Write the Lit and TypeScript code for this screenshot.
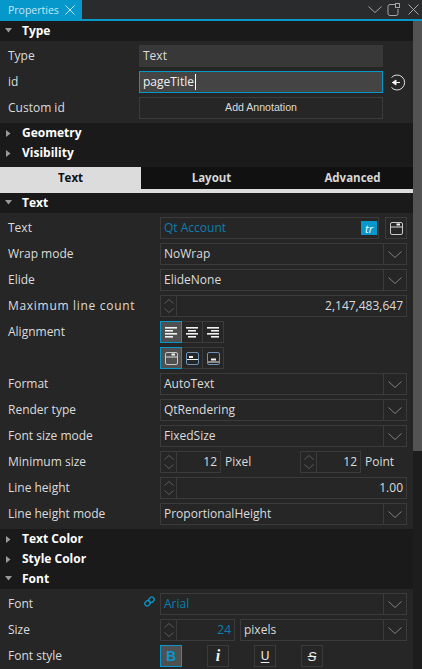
import { LitElement, html, css, svg, nothing } from 'lit';
import { customElement } from 'lit/decorators.js';

const chevron = (w: number, h: number, up = false) => html`
  <svg width=${w} height=${h} viewBox="0 0 ${w} ${h}" fill="none" stroke="currentColor" stroke-width="1">
    <path d=${up ? `M0.5 ${h - 0.5}L${w / 2} 0.5L${w - 0.5} ${h - 0.5}` : `M0.5 0.5L${w / 2} ${h - 0.5}L${w - 0.5} 0.5`}></path>
  </svg>`;

const cross = (s: number) => html`
  <svg width=${s} height=${s} viewBox="0 0 ${s} ${s}" fill="none" stroke="currentColor" stroke-width="1">
    <path d="M0.5 0.5L${s - 0.5} ${s - 0.5}M${s - 0.5} 0.5L0.5 ${s - 0.5}"></path>
  </svg>`;

// 12px square alignment glyphs
const alignIcon = (kind: 'left' | 'center' | 'right') => {
  const rows = [[12, 1], [8, 4], [12, 7], [8, 10]];
  return html`<svg width="12" height="12" viewBox="0 0 12 12" fill="#f2f2f2">
    ${rows.map(([w, y]) => {
      const x = kind === 'left' ? 0 : kind === 'center' ? (12 - w) / 2 : 12 - w;
      return svg`<rect x=${x} y=${y} width=${w} height="1.6"></rect>`;
    })}
  </svg>`;
};

const valignIcon = (kind: 'top' | 'middle' | 'bottom') => html`
  <svg width="13" height="13" viewBox="0 0 13 13" fill="none">
    <rect x="0.5" y="0.5" width="12" height="12" rx="1.5" stroke=${kind === 'top' ? '#c8c8c8' : '#6e93b8'}></rect>
    ${kind === 'top' ? svg`<path d="M1 5H12" stroke="#dcdcdc"></path><path d="M6.5 2.5H10" stroke="#f2f2f2" stroke-width="2"></path>` : nothing}
    ${kind === 'middle' ? svg`<path d="M3 5H7" stroke="#f2f2f2" stroke-width="2"></path><path d="M1 7.5H12" stroke="#f2f2f2"></path>` : nothing}
    ${kind === 'bottom' ? svg`<path d="M4 7.5H9" stroke="#f2f2f2" stroke-width="2"></path><path d="M1 10H12" stroke="#f2f2f2"></path>` : nothing}
  </svg>`;

@customElement('app-root')
export class AppRoot extends LitElement {
  static styles = css`
    :host {
      display: flex;
      flex-direction: column;
      width: 422px;
      height: 669px;
      overflow: hidden;
      background: #1b1b1b;
      color: #dcdcdc;
      font-family: 'Open Sans', 'Noto Sans', sans-serif;
      font-size: 12px;
    }
    .titlebar {
      display: flex;
      align-items: center;
      height: 19px;
      flex: none;
      background: #2a2b2d;
      border-bottom: 2px solid #0798cb;
    }
    .dock-tab {
      display: flex;
      align-items: center;
      gap: 6px;
      width: 82px;
      height: 19px;
      padding-left: 8px;
      box-sizing: border-box;
      background: #0798cb;
      color: #c4e6f3;
      font-size: 10.5px;
    }
    .dock-actions {
      margin-left: auto;
      display: flex;
      align-items: center;
      color: #a6a6a6;
      padding-right: 3px;
    }
    .dock-actions svg { display: block; }
    .dock-float { margin: 0 8px 0 5px; }
    .main {
      flex: 1;
      display: flex;
      min-height: 0;
    }
    .panel {
      width: 413px;
      flex: none;
      overflow: hidden;
    }
    .scrollbar {
      flex: 1;
      background: #1d1d1d;
    }
    .thumb {
      height: 430px;
      background: #535353;
    }
    .section {
      display: flex;
      align-items: center;
      height: 20px;
      box-sizing: border-box;
      padding-bottom: 2px;
      background: #1a1a1a;
      color: #fff;
      font-weight: 700;
      font-size: 12px;
    }
    .arrow {
      width: 22px;
      flex: none;
      display: flex;
      padding-left: 5px;
      box-sizing: border-box;
    }
    .arrow.closed { padding-left: 6px; margin-bottom: -2px; }
    .body {
      display: flex;
      flex-direction: column;
      gap: 4px;
      padding: 4px 0;
      background: #262626;
    }
    .row {
      display: flex;
      align-items: center;
      height: 22px;
      padding-right: 6px;
    }
    .label {
      width: 160px;
      flex: none;
      box-sizing: border-box;
      padding: 0 0 2px 8px;
      position: relative;
    }
    .label.stretch { letter-spacing: 0.7px; }
    .top .label { width: 139px; }
    .top.row { padding-right: 0; }
    .field {
      flex: 1;
      min-width: 0;
      height: 22px;
      box-sizing: border-box;
      display: flex;
      align-items: center;
      padding: 0 3px 2px;
      border: 1px solid #3b3b3b;
      white-space: nowrap;
    }
    .field.readonly { background: #383838; border-color: #383838; }
    .field.focus { background: #444; border-color: #0798cb; color: #f0f0f0; }
    .caret { width: 1px; height: 16px; background: #fff; margin: 0 0 -2px 1px; }
    .field.action { justify-content: center; font-family: 'Liberation Sans', sans-serif; font-size: 10.6px; }
    .slot {
      width: 30px;
      flex: none;
      display: flex;
      justify-content: center;
      padding-right: 2px;
      box-sizing: border-box;
    }
    .blue { color: #0b7fae; }
    .combo { padding-right: 0; }
    .combo span { flex: 1; }
    .grow-text { flex: 1; }
    .drop {
      width: 22px;
      height: 20px;
      flex: none;
      display: flex;
      align-items: center;
      justify-content: center;
      margin-bottom: -2px;
      border-left: 1px solid #3b3b3b;
      color: #808080;
    }
    .tr {
      width: 16px;
      height: 14px;
      background: #0798cb;
      color: #fff;
      font-style: italic;
      font-size: 11px;
      display: flex;
      align-items: center;
      justify-content: center;
      margin: 0 -2px -2px 0;
    }
    .square {
      width: 22px;
      height: 22px;
      flex: none;
      box-sizing: border-box;
      display: flex;
      align-items: center;
      justify-content: center;
      border: 1px solid #3b3b3b;
    }
    .square.side { margin-left: 6px; }
    .spin {
      display: flex;
      height: 22px;
      box-sizing: border-box;
      border: 1px solid #3b3b3b;
      flex: none;
    }
    .spin.wide { flex: 1; }
    .steps {
      width: 15px;
      flex: none;
      border-right: 1px solid #3b3b3b;
      display: flex;
      flex-direction: column;
      align-items: center;
      justify-content: center;
      gap: 4px;
      color: #5c5c5c;
    }
    .steps svg { display: block; }
    .value {
      flex: 1;
      display: flex;
      align-items: center;
      justify-content: flex-end;
      padding: 0 3px 2px 0;
    }
    .unit { padding: 0 0 2px 4px; }
    .w61 { width: 61px; }
    .w75 { width: 75px; }
    .pixel-unit { width: 75px; }
    .grow { margin-left: 5px; }
    .group { display: flex; }
    .group .square { margin-right: -1px; }
    .square.on { background: #505050; border-color: #0798cb; position: relative; z-index: 1; }
    .styles { display: flex; gap: 25px; }
    .styles .square { font-family: 'Liberation Sans', sans-serif; font-weight: 700; font-size: 14px; color: #f0f0f0; }
    .styles .b { color: #0798cb; }
    .styles .i { font-family: 'Liberation Serif', serif; font-style: italic; font-size: 16px; }
    .styles .u { font-weight: 400; font-size: 12px; text-decoration: underline; text-underline-offset: 2px; }
    .styles .s { font-weight: 400; font-size: 13px; font-style: italic; text-decoration: line-through; }
    .link {
      position: absolute;
      right: 5px;
      top: 1px;
      color: #0b8fc2;
    }
    .tabwrap { background: #262626; }
    .tabs {
      display: grid;
      grid-template-columns: repeat(3, 141px);
      height: 22px;
      margin-top: 4px;
      background: #111;
      border-bottom: 4px solid #dcdcdc;
      color: #d8d8d8;
      font-weight: 700;
      font-size: 11.5px;
    }
    .tabs div { display: flex; align-items: center; justify-content: center; padding-bottom: 2px; }
    .tabs .active { background: #dcdcdc; color: #111; }
  `;

  private section(title: string, open: boolean) {
    return html`<div class="section">
      <div class="arrow ${open ? '' : 'closed'}">
        <svg width=${open ? 7 : 5} height=${open ? 5 : 7} viewBox=${open ? '0 0 7 5' : '0 0 5 7'} fill="#9a9a9a">
          <path d=${open ? 'M0 0H7L3.5 4.5Z' : 'M0 0L4.5 3.5L0 7Z'}></path>
        </svg>
      </div>
      ${title}
    </div>`;
  }

  private combo(label: string, value: string) {
    return html`<div class="row">
      <div class="label">${label}</div>
      <div class="field combo"><span>${value}</span><div class="drop">${chevron(14, 7)}</div></div>
    </div>`;
  }

  private steps() {
    return html`<div class="steps">${chevron(10, 5, true)}${chevron(10, 5)}</div>`;
  }

  render() {
    return html`
      <div class="titlebar">
        <div class="dock-tab">Properties ${cross(10)}</div>
        <div class="dock-actions">
          ${chevron(14, 7)}
          <svg class="dock-float" width="13" height="13" viewBox="0 0 13 13" fill="none" stroke="currentColor">
            <path d="M8 1.5H3A2 2 0 0 0 1 3.5V10.5A2 2 0 0 0 3 12.5H9A2 2 0 0 0 11 10.5V6"></path>
            <rect x="8.5" y="0.5" width="4" height="4"></rect>
          </svg>
          ${cross(11)}
        </div>
      </div>
      <div class="main">
        <div class="panel">
          ${this.section('Type', true)}
          <div class="body">
            <div class="row top">
              <div class="label">Type</div>
              <div class="field readonly">Text</div>
              <div class="slot"></div>
            </div>
            <div class="row top">
              <div class="label">id</div>
              <div class="field focus">pageTitle<span class="caret"></span></div>
              <div class="slot">
                <svg width="17" height="17" viewBox="0 0 17 17" fill="none">
                  <path d="M2.5 3.5A7.5 7.5 0 1 1 2.5 13.5" stroke="#e4e4e4"></path>
                  <path d="M3 8.5H11M3.5 8.5L7 6V11Z" stroke="#f4f4f4" fill="#f4f4f4"></path>
                </svg>
              </div>
            </div>
            <div class="row top">
              <div class="label">Custom id</div>
              <div class="field action">Add Annotation</div>
              <div class="slot"></div>
            </div>
          </div>
          ${this.section('Geometry', false)}
          ${this.section('Visibility', false)}
          <div class="tabwrap">
            <div class="tabs">
              <div class="active">Text</div>
              <div>Layout</div>
              <div>Advanced</div>
            </div>
          </div>
          ${this.section('Text', true)}
          <div class="body">
            <div class="row">
              <div class="label">Text</div>
              <div class="field blue"><span class="grow-text">Qt Account</span><div class="tr">tr</div></div>
              <div class="square side">${valignIcon('top')}</div>
            </div>
            ${this.combo('Wrap mode', 'NoWrap')}
            ${this.combo('Elide', 'ElideNone')}
            <div class="row">
              <div class="label stretch">Maximum line count</div>
              <div class="spin wide">${this.steps()}<div class="value">2,147,483,647</div></div>
            </div>
            <div class="row">
              <div class="label">Alignment</div>
              <div class="group">
                <div class="square on">${alignIcon('left')}</div>
                <div class="square">${alignIcon('center')}</div>
                <div class="square">${alignIcon('right')}</div>
              </div>
            </div>
            <div class="row">
              <div class="label"></div>
              <div class="group">
                <div class="square on">${valignIcon('top')}</div>
                <div class="square">${valignIcon('middle')}</div>
                <div class="square">${valignIcon('bottom')}</div>
              </div>
            </div>
            ${this.combo('Format', 'AutoText')}
            ${this.combo('Render type', 'QtRendering')}
            ${this.combo('Font size mode', 'FixedSize')}
            <div class="row">
              <div class="label">Minimum size</div>
              <div class="spin w61">${this.steps()}<div class="value">12</div></div>
              <div class="unit pixel-unit">Pixel</div>
              <div class="spin w61">${this.steps()}<div class="value">12</div></div>
              <div class="unit">Point</div>
            </div>
            <div class="row">
              <div class="label">Line height</div>
              <div class="spin wide">${this.steps()}<div class="value">1.00</div></div>
            </div>
            ${this.combo('Line height mode', 'ProportionalHeight')}
          </div>
          ${this.section('Text Color', false)}
          ${this.section('Style Color', false)}
          ${this.section('Font', true)}
          <div class="body">
            <div class="row">
              <div class="label">Font
                <svg class="link" width="11" height="11" viewBox="0 0 11 11" fill="none" stroke="currentColor" stroke-width="1.4">
                  <rect x="0.8" y="5" width="5.5" height="4.6" rx="2" transform="rotate(-45 3.5 7.3)"></rect>
                  <rect x="4.7" y="1.4" width="5.5" height="4.6" rx="2" transform="rotate(-45 7.5 3.7)"></rect>
                </svg>
              </div>
              <div class="field combo blue"><span>Arial</span><div class="drop">${chevron(14, 7)}</div></div>
            </div>
            <div class="row">
              <div class="label">Size</div>
              <div class="spin w75">${this.steps()}<div class="value blue">24</div></div>
              <div class="field combo grow"><span>pixels</span><div class="drop">${chevron(14, 7)}</div></div>
            </div>
            <div class="row">
              <div class="label">Font style</div>
              <div class="styles">
                <div class="square on b">B</div>
                <div class="square i">i</div>
                <div class="square u">U</div>
                <div class="square s">S</div>
              </div>
            </div>
          </div>
        </div>
        <div class="scrollbar"><div class="thumb"></div></div>
      </div>
    `;
  }
}
